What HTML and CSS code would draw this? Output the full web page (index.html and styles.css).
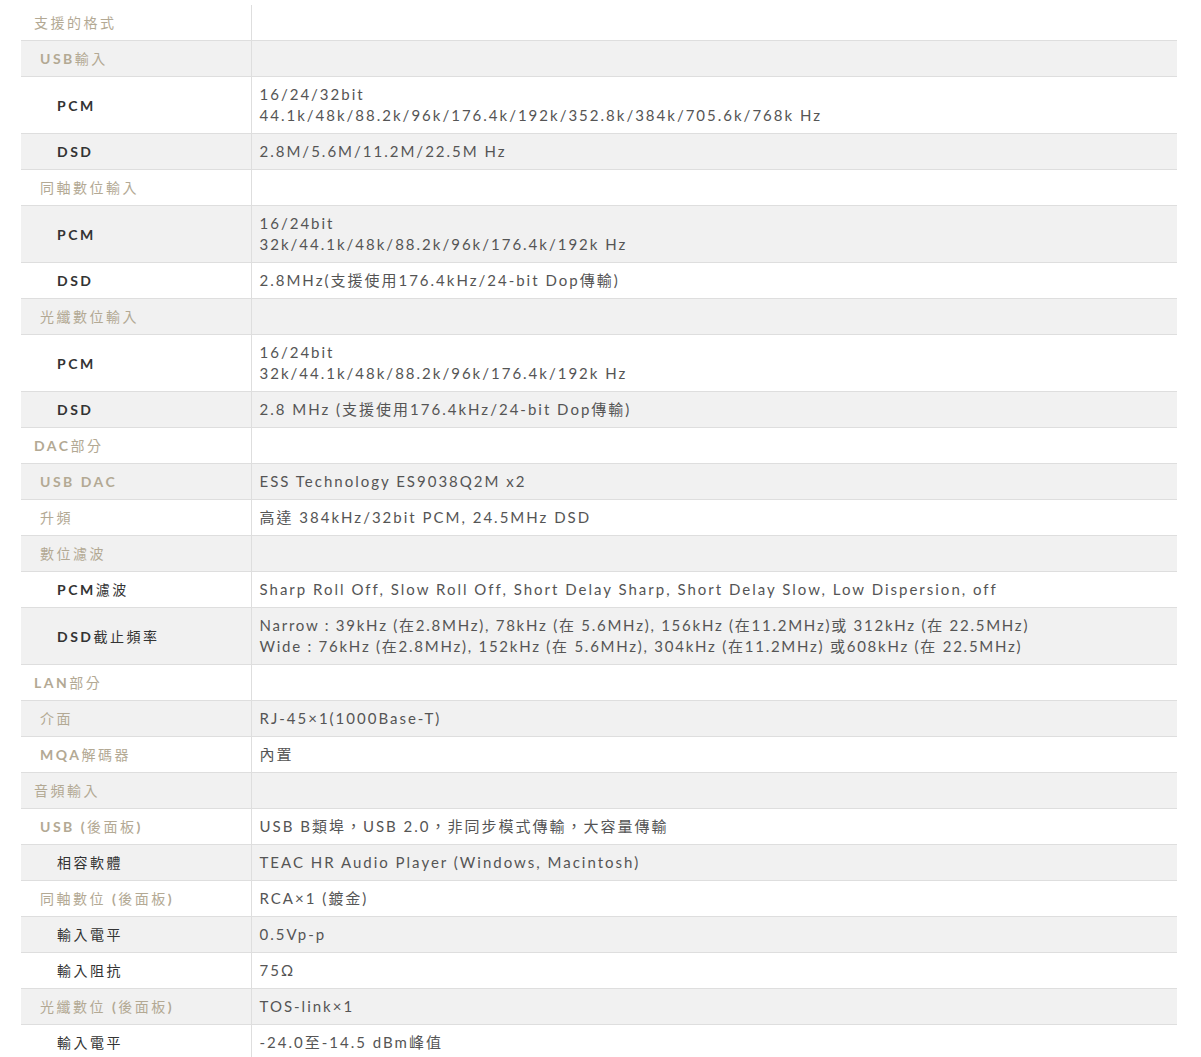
FILE: index.html
```html
<!DOCTYPE html>
<html lang="zh-Hant">
<head>
    <meta charset="UTF-8">
    <title>規格</title>
    <link rel="stylesheet" href="styles.css">
</head>
<body>
    <div class="spec">
        <table class="spec-table">
            <colgroup><col class="col-name"><col></colgroup>
            <tr><td class="lv0">支援的格式</td><td></td></tr>
            <tr><td class="lv1"><b>USB</b>輸入</td><td></td></tr>
            <tr><td class="lv2"><b>PCM</b></td><td>16/24/32bit<br>44.1k/48k/88.2k/96k/176.4k/192k/352.8k/384k/705.6k/768k Hz</td></tr>
            <tr><td class="lv2"><b>DSD</b></td><td>2.8M/5.6M/11.2M/22.5M Hz</td></tr>
            <tr><td class="lv1">同軸數位輸入</td><td></td></tr>
            <tr><td class="lv2"><b>PCM</b></td><td>16/24bit<br>32k/44.1k/48k/88.2k/96k/176.4k/192k Hz</td></tr>
            <tr><td class="lv2"><b>DSD</b></td><td>2.8MHz(支援使用176.4kHz/24-bit Dop傳輸)</td></tr>
            <tr><td class="lv1">光纖數位輸入</td><td></td></tr>
            <tr><td class="lv2"><b>PCM</b></td><td>16/24bit<br>32k/44.1k/48k/88.2k/96k/176.4k/192k Hz</td></tr>
            <tr><td class="lv2"><b>DSD</b></td><td>2.8 MHz (支援使用176.4kHz/24-bit Dop傳輸)</td></tr>
            <tr><td class="lv0"><b>DAC</b>部分</td><td></td></tr>
            <tr><td class="lv1"><b>USB DAC</b></td><td>ESS Technology ES9038Q2M x2</td></tr>
            <tr><td class="lv1">升頻</td><td>高達 384kHz/32bit PCM, 24.5MHz DSD</td></tr>
            <tr><td class="lv1">數位濾波</td><td></td></tr>
            <tr><td class="lv2"><b>PCM</b>濾波</td><td>Sharp Roll Off, Slow Roll Off, Short Delay Sharp, Short Delay Slow, Low Dispersion, off</td></tr>
            <tr><td class="lv2"><b>DSD</b>截止頻率</td><td class="narrow">Narrow : 39kHz (在2.8MHz), 78kHz (在 5.6MHz), 156kHz (在11.2MHz)或 312kHz (在 22.5MHz)<br>Wide : 76kHz (在2.8MHz), 152kHz (在 5.6MHz), 304kHz (在11.2MHz) 或608kHz (在 22.5MHz)</td></tr>
            <tr><td class="lv0"><b>LAN</b>部分</td><td></td></tr>
            <tr><td class="lv1">介面</td><td>RJ-45×1(1000Base-T)</td></tr>
            <tr><td class="lv1"><b>MQA</b>解碼器</td><td>內置</td></tr>
            <tr><td class="lv0">音頻輸入</td><td></td></tr>
            <tr><td class="lv1"><b>USB (</b>後面板<b>)</b></td><td>USB B類埠，USB 2.0，非同步模式傳輸，大容量傳輸</td></tr>
            <tr><td class="lv2">相容軟體</td><td>TEAC HR Audio Player (Windows, Macintosh)</td></tr>
            <tr><td class="lv1">同軸數位<b> (</b>後面板<b>)</b></td><td>RCA×1 (鍍金)</td></tr>
            <tr><td class="lv2">輸入電平</td><td>0.5Vp-p</td></tr>
            <tr><td class="lv2">輸入阻抗</td><td>75Ω</td></tr>
            <tr><td class="lv1">光纖數位<b> (</b>後面板<b>)</b></td><td>TOS-link×1</td></tr>
            <tr><td class="lv2">輸入電平</td><td>-24.0至-14.5 dBm峰值</td></tr>
        </table>
    </div>
</body>
</html>
```

FILE: styles.css
```css
body {
    margin: 0;
    background: #fff;
    font-family: Lato, "Noto Sans CJK TC", sans-serif;
}
.spec {
    padding: 5px 24px 0 21px;
}
.spec-table {
    width: 100%;
    border-collapse: collapse;
    table-layout: fixed;
    font-size: 15px;
    line-height: 21px;
}
.col-name {
    width: 230px;
}
.spec-table td {
    padding: 7px 8px;
    border-bottom: 1px solid #dedede;
    letter-spacing: 2px;
    color: #555;
    vertical-align: middle;
}
.spec-table td:first-child {
    border-right: 1px solid #dedede;
    font-size: 14px;
    letter-spacing: 2.5px;
}
.spec-table tr:nth-child(even) td {
    background-color: #f1f1f1;
}
.spec-table .narrow {
    letter-spacing: 1.75px;
}
.lv0 {
    padding-left: 13px !important;
    color: #b3a994 !important;
}
.lv1 {
    padding-left: 19px !important;
    color: #b3a994 !important;
}
.lv2 {
    padding-left: 36px !important;
    color: #333 !important;
}
```
